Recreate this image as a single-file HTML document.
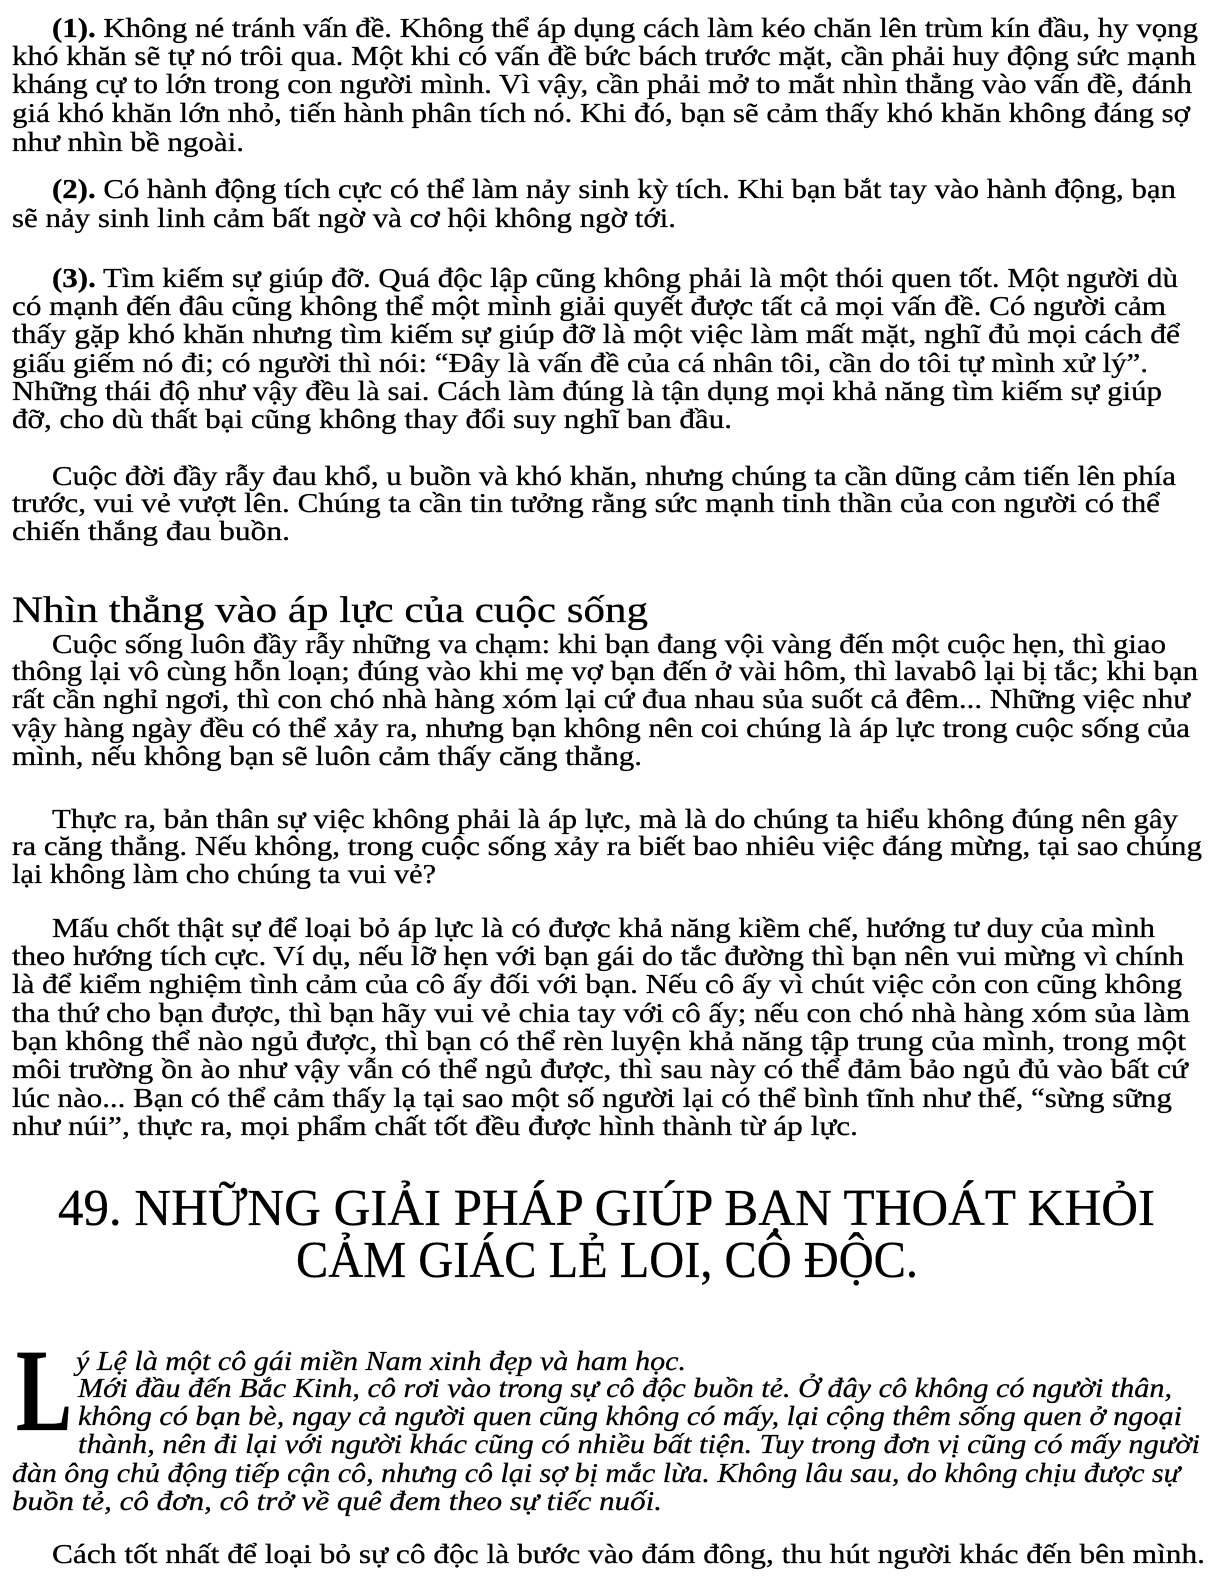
<!DOCTYPE html>
<html><head><meta charset="utf-8"><style>
html,body{margin:0;padding:0;background:#fff;}
svg{display:block;}
text{font-family:"Liberation Serif",serif;fill:#000;stroke:#000;stroke-width:0.3px;}
</style></head><body>
<svg width="1224" height="1584" viewBox="0 0 1224 1584" xmlns="http://www.w3.org/2000/svg">
<g font-size="27">
<text x="52" y="37" textLength="1146" lengthAdjust="spacingAndGlyphs"><tspan font-weight="bold">(1).</tspan> Không né tránh vấn đề. Không thể áp dụng cách làm kéo chăn lên trùm kín đầu, hy vọng</text>
<text x="12" y="65" textLength="1184" lengthAdjust="spacingAndGlyphs">khó khăn sẽ tự nó trôi qua. Một khi có vấn đề bức bách trước mặt, cần phải huy động sức mạnh</text>
<text x="12" y="93" textLength="1180" lengthAdjust="spacingAndGlyphs">kháng cự to lớn trong con người mình. Vì vậy, cần phải mở to mắt nhìn thẳng vào vấn đề, đánh</text>
<text x="12" y="122" textLength="1178" lengthAdjust="spacingAndGlyphs">giá khó khăn lớn nhỏ, tiến hành phân tích nó. Khi đó, bạn sẽ cảm thấy khó khăn không đáng sợ</text>
<text x="12" y="151" textLength="232" lengthAdjust="spacingAndGlyphs">như nhìn bề ngoài.</text>

<text x="52" y="198" textLength="1124" lengthAdjust="spacingAndGlyphs"><tspan font-weight="bold">(2).</tspan> Có hành động tích cực có thể làm nảy sinh kỳ tích. Khi bạn bắt tay vào hành động, bạn</text>
<text x="12" y="227" textLength="664" lengthAdjust="spacingAndGlyphs">sẽ nảy sinh linh cảm bất ngờ và cơ hội không ngờ tới.</text>

<text x="52" y="287" textLength="1126" lengthAdjust="spacingAndGlyphs"><tspan font-weight="bold">(3).</tspan> Tìm kiếm sự giúp đỡ. Quá độc lập cũng không phải là một thói quen tốt. Một người dù</text>
<text x="12" y="315" textLength="1154" lengthAdjust="spacingAndGlyphs">có mạnh đến đâu cũng không thể một mình giải quyết được tất cả mọi vấn đề. Có người cảm</text>
<text x="12" y="343" textLength="1168" lengthAdjust="spacingAndGlyphs">thấy gặp khó khăn nhưng tìm kiếm sự giúp đỡ là một việc làm mất mặt, nghĩ đủ mọi cách để</text>
<text x="12" y="372" textLength="1136" lengthAdjust="spacingAndGlyphs">giấu giếm nó đi; có người thì nói: “Đây là vấn đề của cá nhân tôi, cần do tôi tự mình xử lý”.</text>
<text x="12" y="400" textLength="1150" lengthAdjust="spacingAndGlyphs">Những thái độ như vậy đều là sai. Cách làm đúng là tận dụng mọi khả năng tìm kiếm sự giúp</text>
<text x="12" y="428" textLength="720" lengthAdjust="spacingAndGlyphs">đỡ, cho dù thất bại cũng không thay đổi suy nghĩ ban đầu.</text>

<text x="52" y="485" textLength="1124" lengthAdjust="spacingAndGlyphs">Cuộc đời đầy rẫy đau khổ, u buồn và khó khăn, nhưng chúng ta cần dũng cảm tiến lên phía</text>
<text x="12" y="512" textLength="1148" lengthAdjust="spacingAndGlyphs">trước, vui vẻ vượt lên. Chúng ta cần tin tưởng rằng sức mạnh tinh thần của con người có thể</text>
<text x="12" y="540" textLength="278" lengthAdjust="spacingAndGlyphs">chiến thắng đau buồn.</text>
</g>

<text x="12" y="622" font-size="37" textLength="636" lengthAdjust="spacingAndGlyphs">Nhìn thẳng vào áp lực của cuộc sống</text>

<g font-size="27">
<text x="52" y="653" textLength="1114" lengthAdjust="spacingAndGlyphs">Cuộc sống luôn đầy rẫy những va chạm: khi bạn đang vội vàng đến một cuộc hẹn, thì giao</text>
<text x="12" y="680" textLength="1186" lengthAdjust="spacingAndGlyphs">thông lại vô cùng hỗn loạn; đúng vào khi mẹ vợ bạn đến ở vài hôm, thì lavabô lại bị tắc; khi bạn</text>
<text x="12" y="708" textLength="1178" lengthAdjust="spacingAndGlyphs">rất cần nghỉ ngơi, thì con chó nhà hàng xóm lại cứ đua nhau sủa suốt cả đêm... Những việc như</text>
<text x="12" y="737" textLength="1178" lengthAdjust="spacingAndGlyphs">vậy hàng ngày đều có thể xảy ra, nhưng bạn không nên coi chúng là áp lực trong cuộc sống của</text>
<text x="12" y="765" textLength="630" lengthAdjust="spacingAndGlyphs">mình, nếu không bạn sẽ luôn cảm thấy căng thẳng.</text>

<text x="52" y="828" textLength="1126" lengthAdjust="spacingAndGlyphs">Thực ra, bản thân sự việc không phải là áp lực, mà là do chúng ta hiểu không đúng nên gây</text>
<text x="12" y="855" textLength="1190" lengthAdjust="spacingAndGlyphs">ra căng thẳng. Nếu không, trong cuộc sống xảy ra biết bao nhiêu việc đáng mừng, tại sao chúng</text>
<text x="12" y="883" textLength="424" lengthAdjust="spacingAndGlyphs">lại không làm cho chúng ta vui vẻ?</text>

<text x="52" y="937" textLength="1103" lengthAdjust="spacingAndGlyphs">Mấu chốt thật sự để loại bỏ áp lực là có được khả năng kiềm chế, hướng tư duy của mình</text>
<text x="12" y="965" textLength="1172" lengthAdjust="spacingAndGlyphs">theo hướng tích cực. Ví dụ, nếu lỡ hẹn với bạn gái do tắc đường thì bạn nên vui mừng vì chính</text>
<text x="12" y="993" textLength="1170" lengthAdjust="spacingAndGlyphs">là để kiểm nghiệm tình cảm của cô ấy đối với bạn. Nếu cô ấy vì chút việc cỏn con cũng không</text>
<text x="12" y="1022" textLength="1178" lengthAdjust="spacingAndGlyphs">tha thứ cho bạn được, thì bạn hãy vui vẻ chia tay với cô ấy; nếu con chó nhà hàng xóm sủa làm</text>
<text x="12" y="1050" textLength="1174" lengthAdjust="spacingAndGlyphs">bạn không thể nào ngủ được, thì bạn có thể rèn luyện khả năng tập trung của mình, trong một</text>
<text x="12" y="1078" textLength="1176" lengthAdjust="spacingAndGlyphs">môi trường ồn ào như vậy vẫn có thể ngủ được, thì sau này có thể đảm bảo ngủ đủ vào bất cứ</text>
<text x="12" y="1107" textLength="1160" lengthAdjust="spacingAndGlyphs">lúc nào... Bạn có thể cảm thấy lạ tại sao một số người lại có thể bình tĩnh như thế, “sừng sững</text>
<text x="12" y="1135" textLength="846" lengthAdjust="spacingAndGlyphs">như núi”, thực ra, mọi phẩm chất tốt đều được hình thành từ áp lực.</text>
</g>

<text x="58" y="1225" font-size="52" textLength="1097" lengthAdjust="spacingAndGlyphs">49. NHỮNG GIẢI PHÁP GIÚP BẠN THOÁT KHỎI</text>
<text x="296" y="1277" font-size="52" textLength="622" lengthAdjust="spacingAndGlyphs">CẢM GIÁC LẺ LOI, CÔ ĐỘC.</text>

<text x="16" y="1430" font-size="118" font-weight="bold" textLength="56" lengthAdjust="spacingAndGlyphs">L</text>

<g font-size="27" font-style="italic">
<text x="76" y="1370" textLength="610" lengthAdjust="spacingAndGlyphs">ý Lệ là một cô gái miền Nam xinh đẹp và ham học.</text>
<text x="78" y="1397" textLength="1094" lengthAdjust="spacingAndGlyphs">Mới đầu đến Bắc Kinh, cô rơi vào trong sự cô độc buồn tẻ. Ở đây cô không có người thân,</text>
<text x="78" y="1425" textLength="1104" lengthAdjust="spacingAndGlyphs">không có bạn bè, ngay cả người quen cũng không có mấy, lại cộng thêm sống quen ở ngoại</text>
<text x="78" y="1453" textLength="1122" lengthAdjust="spacingAndGlyphs">thành, nên đi lại với người khác cũng có nhiều bất tiện. Tuy trong đơn vị cũng có mấy người</text>
<text x="12" y="1482" textLength="1168" lengthAdjust="spacingAndGlyphs">đàn ông chủ động tiếp cận cô, nhưng cô lại sợ bị mắc lừa. Không lâu sau, do không chịu được sự</text>
<text x="12" y="1510" textLength="650" lengthAdjust="spacingAndGlyphs">buồn tẻ, cô đơn, cô trở về quê đem theo sự tiếc nuối.</text>
</g>

<text x="52" y="1563" font-size="27" textLength="1153" lengthAdjust="spacingAndGlyphs">Cách tốt nhất để loại bỏ sự cô độc là bước vào đám đông, thu hút người khác đến bên mình.</text>
</svg>
</body></html>
